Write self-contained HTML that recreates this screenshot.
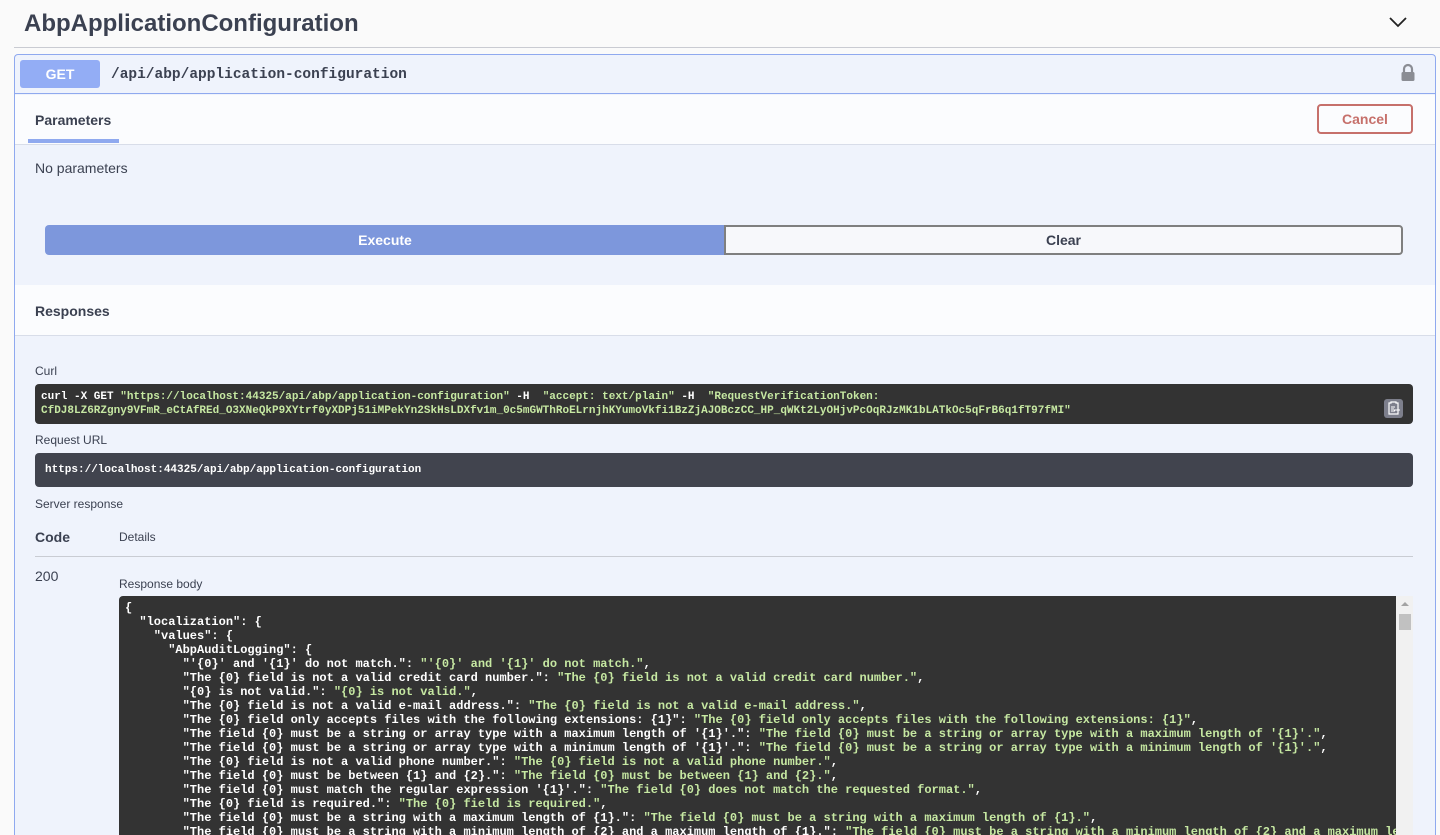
<!DOCTYPE html>
<html><head><meta charset="utf-8"><style>
*{box-sizing:border-box;margin:0;padding:0}
html,body{width:1440px;height:835px;overflow:hidden}
body{background:#fafafa;font-family:"Liberation Sans",Arial,sans-serif;color:#3b4151}
#wrap{position:relative;width:1440px;height:835px;overflow:hidden}
.abs{position:absolute}
h1{position:absolute;left:24px;top:10px;font-size:24px;font-weight:bold;color:#3b4151}
.hr{position:absolute;left:14px;right:0;top:47px;height:1px;background:#c9cbd2}
.op{position:absolute;left:14px;top:54px;width:1422px;height:781px;background:#eff3fc;border:1px solid #8fa9ef;border-bottom:none;border-radius:4px 4px 0 0;overflow:hidden}
.mono{font-family:"Liberation Mono",monospace}
pre{font-family:"Liberation Mono",monospace;font-size:12px;font-weight:bold;line-height:14px;color:#fff}
.s{color:#c6e8a2}
</style></head><body><div id="wrap">
<h1>AbpApplicationConfiguration</h1>
<svg class="abs" style="left:1388px;top:15px" width="20" height="14" viewBox="0 0 20 14"><path d="M2 3 L10 11 L18 3" fill="none" stroke="#222" stroke-width="1.8"/></svg>
<div class="hr"></div>
<div class="op">
  <div class="abs" style="left:0;top:0;width:1420px;height:39px;border-bottom:1px solid #8fa9ef"></div>
  <div class="abs" style="left:5px;top:5px;width:80px;height:28px;background:#93adf5;border-radius:3px;color:#fff;font-weight:bold;font-size:14px;text-align:center;line-height:28px">GET</div>
  <div class="abs mono" style="left:96px;top:12px;font-size:14.5px;font-weight:bold;color:#3b4151">/api/abp/application-configuration</div>
  <svg class="abs" style="left:1385px;top:7px" width="16" height="20" viewBox="0 0 16 20"><path d="M4 11 V7 a4 4 0 0 1 8 0 V11" fill="none" stroke="#8b8d94" stroke-width="2.2"/><rect x="1.5" y="10" width="13" height="9" rx="1.5" fill="#8b8d94"/></svg>
  <div class="abs" style="left:0;top:40px;width:1420px;height:50px;background:#fbfcfe;border-bottom:1px solid #d8dde9"></div>
  <div class="abs" style="left:20px;top:57px;font-size:14px;font-weight:bold">Parameters</div>
  <div class="abs" style="left:13px;top:84px;width:91px;height:4px;background:#8fa9ef"></div>
  <div class="abs" style="left:1302px;top:49px;width:96px;height:30px;border:2px solid #c6706b;border-radius:4px;color:#c6706b;font-weight:bold;font-size:14px;text-align:center;line-height:26px">Cancel</div>
  <div class="abs" style="left:20px;top:105px;font-size:14px">No parameters</div>
  <div class="abs" style="left:30px;top:170px;width:680px;height:30px;background:#7d97dc;border-radius:4px 0 0 4px;color:#fff;font-weight:bold;font-size:14px;text-align:center;line-height:30px">Execute</div>
  <div class="abs" style="left:709px;top:170px;width:679px;height:30px;border:2px solid #7f7f7f;border-radius:0 4px 4px 0;background:#f7f8fb;font-weight:bold;font-size:14px;text-align:center;line-height:26px">Clear</div>
  <div class="abs" style="left:0;top:230px;width:1420px;height:51px;background:#fbfcfe;border-bottom:1px solid #d8dde9"></div>
  <div class="abs" style="left:20px;top:248px;font-size:14px;font-weight:bold">Responses</div>
  <div class="abs" style="left:20px;top:309px;font-size:12px">Curl</div>
  <div class="abs" style="left:20px;top:329px;width:1378px;height:40px;background:#333;border-radius:4px"></div>
  <pre class="abs" style="left:26px;top:335px;font-size:11px">curl -X GET <span class="s">"https://localhost:44325/api/abp/application-configuration"</span> -H  <span class="s">"accept: text/plain"</span> -H  <span class="s">"RequestVerificationToken:
CfDJ8LZ6RZgny9VFmR_eCtAfREd_O3XNeQkP9XYtrf0yXDPj51iMPekYn2SkHsLDXfv1m_0c5mGWThRoELrnjhKYumoVkfi1BzZjAJOBczCC_HP_qWKt2LyOHjvPcOqRJzMK1bLATkOc5qFrB6q1fT97fMI"</span></pre>
  <div class="abs" style="left:1369px;top:344px;width:19px;height:19px;background:#7d7f8c;border-radius:3px"></div>
  <svg class="abs" style="left:1371px;top:346px" width="15" height="15" viewBox="0 0 15 15"><path d="M3 2h2v-1h5v1h2v11h-9z" fill="none" stroke="#fff" stroke-width="1.2"/><path d="M5 6h4M5 8h3M5 10h4M8 9h6" stroke="#fff" stroke-width="1"/></svg>
  <div class="abs" style="left:20px;top:378px;font-size:12px">Request URL</div>
  <div class="abs" style="left:20px;top:398px;width:1378px;height:34px;background:#41444e;border-radius:4px"></div>
  <pre class="abs" style="left:30px;top:408px;font-size:11px">https://localhost:44325/api/abp/application-configuration</pre>
  <div class="abs" style="left:20px;top:442px;font-size:12px">Server response</div>
  <div class="abs" style="left:20px;top:474px;font-size:14px;font-weight:bold">Code</div>
  <div class="abs" style="left:104px;top:475px;font-size:12px">Details</div>
  <div class="abs" style="left:20px;top:501px;width:1378px;height:1px;background:#c9ccd3"></div>
  <div class="abs" style="left:20px;top:513px;font-size:14px">200</div>
  <div class="abs" style="left:104px;top:522px;font-size:12px">Response body</div>
  <div class="abs" style="left:104px;top:541px;width:1294px;height:240px;background:#333;border-radius:4px 0 0 0;overflow:hidden">
  <pre style="position:absolute;left:6px;top:5px">{
  "localization": {
    "values": {
      "AbpAuditLogging": {
        "'{0}' and '{1}' do not match.": <span class="s">"'{0}' and '{1}' do not match."</span>,
        "The {0} field is not a valid credit card number.": <span class="s">"The {0} field is not a valid credit card number."</span>,
        "{0} is not valid.": <span class="s">"{0} is not valid."</span>,
        "The {0} field is not a valid e-mail address.": <span class="s">"The {0} field is not a valid e-mail address."</span>,
        "The {0} field only accepts files with the following extensions: {1}": <span class="s">"The {0} field only accepts files with the following extensions: {1}"</span>,
        "The field {0} must be a string or array type with a maximum length of '{1}'.": <span class="s">"The field {0} must be a string or array type with a maximum length of '{1}'."</span>,
        "The field {0} must be a string or array type with a minimum length of '{1}'.": <span class="s">"The field {0} must be a string or array type with a minimum length of '{1}'."</span>,
        "The {0} field is not a valid phone number.": <span class="s">"The {0} field is not a valid phone number."</span>,
        "The field {0} must be between {1} and {2}.": <span class="s">"The field {0} must be between {1} and {2}."</span>,
        "The field {0} must match the regular expression '{1}'.": <span class="s">"The field {0} does not match the requested format."</span>,
        "The {0} field is required.": <span class="s">"The {0} field is required."</span>,
        "The field {0} must be a string with a maximum length of {1}.": <span class="s">"The field {0} must be a string with a maximum length of {1}."</span>,
        "The field {0} must be a string with a minimum length of {2} and a maximum length of {1}.": <span class="s">"The field {0} must be a string with a minimum length of {2} and a maximum length of {1}."</span>,</pre>
    <div style="position:absolute;left:1277px;top:0;width:17px;height:240px;background:#f1f1f1"></div>
    <div style="position:absolute;left:1280px;top:18px;width:12px;height:16px;background:#c1c1c1"></div>
    <svg style="position:absolute;left:1281px;top:5px" width="10" height="6"><path d="M1 5L5 1L9 5z" fill="#a3a3a3"/></svg>
  </div>
</div>
</div></body></html>
